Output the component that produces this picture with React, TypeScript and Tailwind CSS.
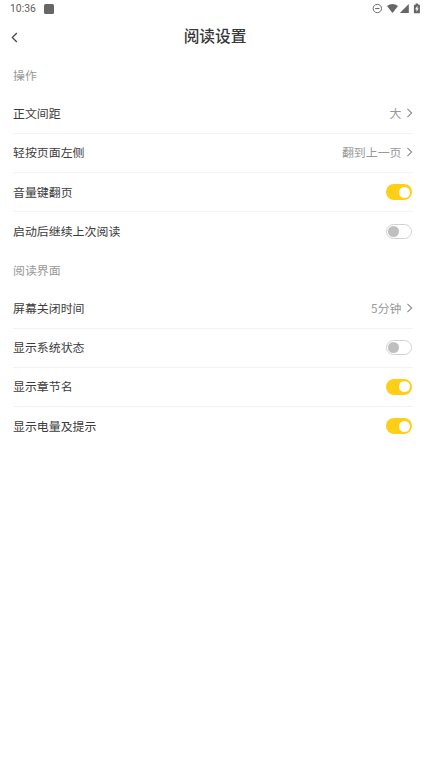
type RowProps = {
  label: string;
  value?: string;
  on?: boolean;
  last?: boolean;
};

function StatusBar() {
  return (
    <div className="flex h-[18px] items-center justify-between pl-[10px] pr-[10px] text-[#666]">
      <div className="flex items-center gap-[8px]">
        <span className="w-[26px] whitespace-nowrap font-['Roboto',sans-serif] text-[10.4px] leading-[18px] text-[#606060]">10:36</span>
        <span className="h-[9.5px] w-[9.5px] rounded-[1.5px] bg-[#666]" />
      </div>
      <svg width="48" height="12" viewBox="0 0 48 12" fill="none">
        <circle cx="5.3" cy="5.5" r="4.2" stroke="#6a6a6a" strokeWidth="1" />
        <path d="M3.1 5.5h4.4" stroke="#6a6a6a" strokeWidth="1.1" />
        <path d="M15 2.9Q20.5 -0.8 26 2.9L20.5 10.1Z" fill="#666" />
        <path d="M36.8 1V10.1H27.8Z" fill="#666" />
        <path d="M41.9 1.7h1.7V0.6h2.6v1.1h1.7v8.6H41.9Z" fill="#666" />
        <path d="M45.5 2.8L43.1 6.2h1.4v2.6l2.2-3.4h-1.2Z" fill="#fff" />
      </svg>
    </div>
  );
}

function Toggle({ on }: { on: boolean }) {
  return on ? (
    <span className="mr-[0.5px] flex h-[15.5px] w-[26.5px] items-center justify-end rounded-full bg-[#ffcf18] pr-[2px]">
      <span className="h-[11px] w-[11px] rounded-full bg-white" />
    </span>
  ) : (
    <span className="mr-[0.5px] flex h-[15.5px] w-[26.5px] items-center rounded-full border border-[#d2d2d2] bg-white pl-[1px]">
      <span className="h-[11px] w-[11px] rounded-full bg-[#bfbfbf]" />
    </span>
  );
}

function Row({ label, value, on, last }: RowProps) {
  return (
    <div className={`flex h-[39.2px] items-center justify-between border-b ${last ? "border-transparent" : "border-[#f3f3f3]"}`}>
      <span className="pb-[1px] text-[#3c3c3c]">{label}</span>
      {value ? (
        <span className="flex items-center gap-[4px] pb-[1px] text-[#999]">
          {value}
          <svg width="7" height="10" viewBox="0 0 7 10" fill="none" stroke="#8c8c8c" strokeWidth="1.1">
            <path d="M1.4 0.8L5.7 5L1.4 9.2" />
          </svg>
        </span>
      ) : (
        <Toggle on={!!on} />
      )}
    </div>
  );
}

function SectionTitle({ children }: { children: string }) {
  return <h2 className="flex h-[38px] items-center pb-[1px] text-[#999]">{children}</h2>;
}

export default function App() {
  return (
    <div className="h-[766px] w-[430px] bg-white font-['Noto_Sans_CJK_SC',sans-serif] text-[11.93px] leading-[18px]">
      <StatusBar />
      <header className="grid h-[38px] grid-cols-[40px_1fr_40px] items-center">
        <button className="pl-[11px]" aria-label="返回">
          <svg width="8" height="11" viewBox="0 0 8 11" fill="none" stroke="#444" strokeWidth="1.2">
            <path d="M5.8 1L1.3 5.5L5.8 10" />
          </svg>
        </button>
        <h1 className="pb-[2px] text-center text-[15.7px] font-medium leading-[24px] text-[#383838]">阅读设置</h1>
      </header>
      <main className="pl-[13px] pr-[17.5px] pt-[0.7px]">
        <SectionTitle>操作</SectionTitle>
        <Row label="正文间距" value="大" />
        <Row label="轻按页面左侧" value="翻到上一页" />
        <Row label="音量键翻页" on />
        <Row label="启动后继续上次阅读" on={false} last />
        <SectionTitle>阅读界面</SectionTitle>
        <Row label="屏幕关闭时间" value="5分钟" />
        <Row label="显示系统状态" on={false} />
        <Row label="显示章节名" on />
        <Row label="显示电量及提示" on last />
      </main>
    </div>
  );
}
